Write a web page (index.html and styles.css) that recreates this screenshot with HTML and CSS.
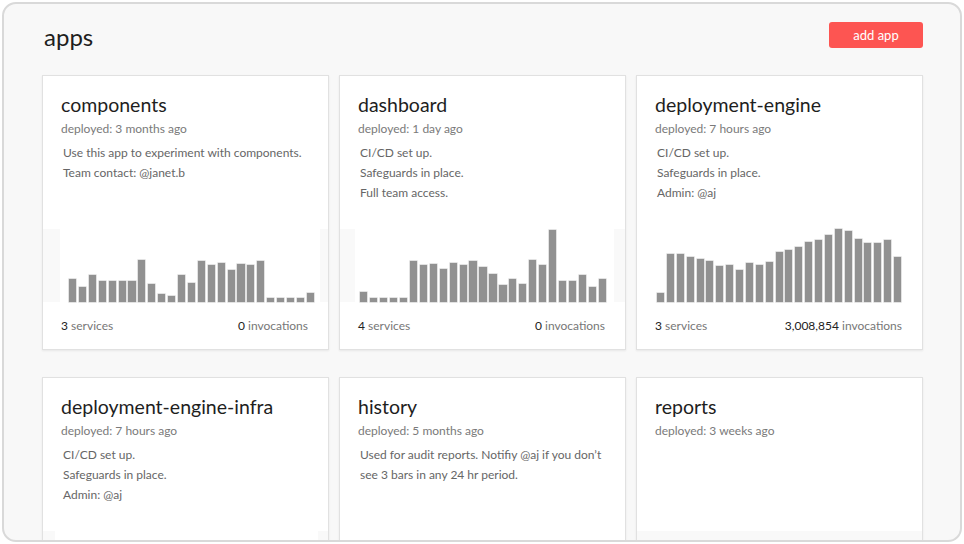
FILE: index.html
```html
<!DOCTYPE html>
<html lang="en">
<head>
<meta charset="utf-8">
<title>apps</title>
<link rel="stylesheet" href="styles.css">
</head>
<body>
<div class="window">
  <header class="top">
    <h1 class="page-title">apps</h1>
    <button class="add-btn">add app</button>
  </header>
  <main class="grid">
    <section class="card">
      <div class="info">
        <h2 class="app-name">components</h2>
        <div class="deployed">deployed: 3 months ago</div>
        <div class="desc">
          <p>Use this app to experiment with components.</p>
          <p>Team contact: @janet.b</p>
        </div>
      </div>
      <div class="chart shaded">
        <div class="plot plot-c1">
          <span class="bar" style="height:23px"></span><span class="bar" style="height:15px"></span><span class="bar" style="height:27px"></span><span class="bar" style="height:21px"></span><span class="bar" style="height:21px"></span><span class="bar" style="height:21px"></span><span class="bar" style="height:21px"></span><span class="bar" style="height:42px"></span><span class="bar" style="height:18px"></span><span class="bar" style="height:8px"></span><span class="bar" style="height:6px"></span><span class="bar" style="height:27px"></span><span class="bar" style="height:19px"></span><span class="bar" style="height:41px"></span><span class="bar" style="height:37px"></span><span class="bar" style="height:39px"></span><span class="bar" style="height:32px"></span><span class="bar" style="height:38px"></span><span class="bar" style="height:37px"></span><span class="bar" style="height:41px"></span><span class="bar" style="height:4px"></span><span class="bar" style="height:4px"></span><span class="bar" style="height:4px"></span><span class="bar" style="height:4px"></span><span class="bar" style="height:9px"></span>
        </div>
      </div>
      <div class="footer"><span><b>3</b> services</span><span><b>0</b> invocations</span></div>
    </section>

    <section class="card">
      <div class="info">
        <h2 class="app-name">dashboard</h2>
        <div class="deployed">deployed: 1 day ago</div>
        <div class="desc">
          <p>CI/CD set up.</p>
          <p>Safeguards in place.</p>
          <p>Full team access.</p>
        </div>
      </div>
      <div class="chart shaded">
        <div class="plot plot-c2">
          <span class="bar" style="height:10px"></span><span class="bar" style="height:4px"></span><span class="bar" style="height:4px"></span><span class="bar" style="height:4px"></span><span class="bar" style="height:4px"></span><span class="bar" style="height:41px"></span><span class="bar" style="height:37px"></span><span class="bar" style="height:38px"></span><span class="bar" style="height:33px"></span><span class="bar" style="height:39px"></span><span class="bar" style="height:37px"></span><span class="bar" style="height:41px"></span><span class="bar" style="height:35px"></span><span class="bar" style="height:28px"></span><span class="bar" style="height:17px"></span><span class="bar" style="height:23px"></span><span class="bar" style="height:18px"></span><span class="bar" style="height:42px"></span><span class="bar" style="height:37px"></span><span class="bar" style="height:72px"></span><span class="bar" style="height:21px"></span><span class="bar" style="height:21px"></span><span class="bar" style="height:27px"></span><span class="bar" style="height:15px"></span><span class="bar" style="height:23px"></span>
        </div>
      </div>
      <div class="footer"><span><b>4</b> services</span><span><b>0</b> invocations</span></div>
    </section>

    <section class="card">
      <div class="info">
        <h2 class="app-name">deployment-engine</h2>
        <div class="deployed">deployed: 7 hours ago</div>
        <div class="desc">
          <p>CI/CD set up.</p>
          <p>Safeguards in place.</p>
          <p>Admin: @aj</p>
        </div>
      </div>
      <div class="chart">
        <div class="plot plot-c3">
          <span class="bar" style="height:9px"></span><span class="bar" style="height:48px"></span><span class="bar" style="height:48px"></span><span class="bar" style="height:45px"></span><span class="bar" style="height:43px"></span><span class="bar" style="height:41px"></span><span class="bar" style="height:36px"></span><span class="bar" style="height:37px"></span><span class="bar" style="height:32px"></span><span class="bar" style="height:39px"></span><span class="bar" style="height:37px"></span><span class="bar" style="height:40px"></span><span class="bar" style="height:50px"></span><span class="bar" style="height:52px"></span><span class="bar" style="height:55px"></span><span class="bar" style="height:60px"></span><span class="bar" style="height:62px"></span><span class="bar" style="height:67px"></span><span class="bar" style="height:73px"></span><span class="bar" style="height:71px"></span><span class="bar" style="height:63px"></span><span class="bar" style="height:59px"></span><span class="bar" style="height:59px"></span><span class="bar" style="height:62px"></span><span class="bar" style="height:45px"></span>
        </div>
      </div>
      <div class="footer"><span><b>3</b> services</span><span><b>3,008,854</b> invocations</span></div>
    </section>

    <section class="card">
      <div class="info">
        <h2 class="app-name">deployment-engine-infra</h2>
        <div class="deployed">deployed: 7 hours ago</div>
        <div class="desc">
          <p>CI/CD set up.</p>
          <p>Safeguards in place.</p>
          <p>Admin: @aj</p>
        </div>
      </div>
      <div class="chart shaded">
        <div class="plot plot-c4"></div>
      </div>
    </section>

    <section class="card">
      <div class="info">
        <h2 class="app-name">history</h2>
        <div class="deployed">deployed: 5 months ago</div>
        <div class="desc">
          <p>Used for audit reports. Notifiy @aj if you don’t see 3 bars in any 24 hr period.</p>
        </div>
      </div>
      <div class="chart">
        <div class="plot"></div>
      </div>
    </section>

    <section class="card">
      <div class="info">
        <h2 class="app-name">reports</h2>
        <div class="deployed">deployed: 3 weeks ago</div>
        <div class="desc"></div>
      </div>
      <div class="chart shaded">
        <div class="plot plot-full"></div>
      </div>
    </section>
  </main>
</div>
</body>
</html>
```

FILE: styles.css
```css
* { box-sizing: border-box; }

html, body {
  margin: 0;
  padding: 0;
  background: #ffffff;
}

body {
  font-family: Lato, "Noto Sans", "Liberation Sans", sans-serif;
  color: #222;
  padding: 2px;
}

.window {
  width: 960px;
  height: 540px;
  border: 2px solid #d9d9d9;
  border-radius: 14px;
  background: #f8f8f8;
  overflow: hidden;
  padding: 0 37px 0 38px;
}

.top {
  display: flex;
  justify-content: space-between;
  align-items: flex-start;
  padding-top: 18px;
  height: 71px;
}

.page-title {
  margin: 0;
  font-size: 24px;
  font-weight: 400;
  line-height: 30px;
  padding-left: 2px;
  color: #1e1e1e;
}

.add-btn {
  width: 94px;
  height: 26px;
  border: 0;
  border-radius: 3px;
  background: #fd5552;
  color: #fff;
  font-family: inherit;
  font-size: 13px;
  line-height: 26px;
  padding: 0;
}

.grid {
  display: grid;
  grid-template-columns: repeat(3, 287px);
  column-gap: 10px;
  row-gap: 27px;
}

.card {
  background: #fff;
  border: 1px solid #e1e1e1;
  box-shadow: 0 1px 2px rgba(0, 0, 0, 0.07);
  height: 275px;
  display: flex;
  flex-direction: column;
}

.info {
  height: 153px;
  padding: 15px 18px 0 18px;
}

.app-name {
  margin: 0;
  font-size: 19.5px;
  font-weight: 400;
  line-height: 28px;
  color: #1e1e1e;
}

.deployed {
  font-size: 12px;
  line-height: 19px;
  color: #7a7a7a;
}

.desc {
  margin-top: 5px;
  padding-left: 2px;
  font-size: 12px;
  line-height: 20px;
  color: #666;
}

.desc p { margin: 0; }

.chart {
  height: 73px;
  display: flex;
}

.chart.shaded {
  background: #f9f9f9;
}

.plot {
  flex: 1;
  background: #fff;
  display: flex;
  align-items: flex-end;
  gap: 2.8px;
}

.plot-c1 { margin: 0 8px 0 17px; padding: 0 6px 0 9px; }
.plot-c2 { margin: 0 11px 0 15px; padding: 0 8px 0 5px; }
.plot-c3 { padding: 0 21px 0 20px; }
.plot-c4 { margin: 0 10px 0 12px; }
.plot-full { background: transparent; }

.bar {
  flex: 1 1 0;
  background: #919191;
  box-shadow: 0 0 0 0.6px #cfcfcf;
}

.footer {
  display: flex;
  justify-content: space-between;
  padding: 14px 20px 0 18px;
  font-size: 12px;
  line-height: 20px;
  color: #777;
}

.footer b {
  font-weight: 400;
  color: #222;
}
```
